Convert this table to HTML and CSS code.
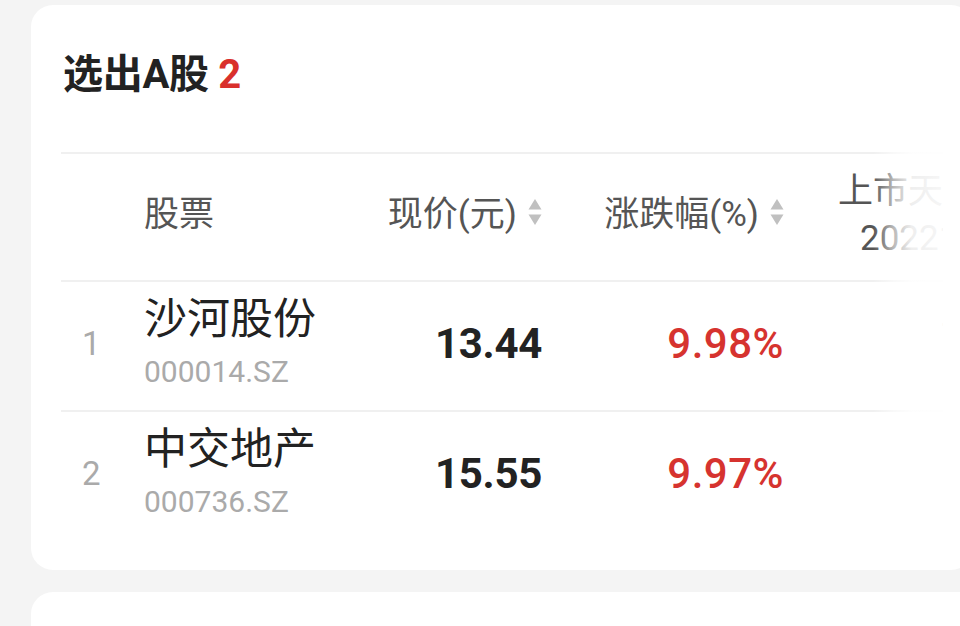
FILE: index.html
```html
<!DOCTYPE html>
<html lang="zh">
<head>
<meta charset="utf-8">
<link rel="stylesheet" href="styles.css">
</head>
<body>
<div class="page">
  <section class="card">
    <h1 class="title">选出A股 <span class="count">2</span></h1>
    <div class="table-wrap">
      <div class="table">
        <div class="row head">
          <div class="cell c-num"></div>
          <div class="cell c-name">股票</div>
          <div class="cell c-price"><span>现价(元)</span>
            <svg class="sort" viewBox="0 0 14 26" width="14" height="26"><path d="M7 0 L13.5 10.5 H0.5 Z" /><path d="M7 26 L13.5 15.5 H0.5 Z" /></svg>
          </div>
          <div class="cell c-pct"><span>涨跌幅(%)</span>
            <svg class="sort" viewBox="0 0 14 26" width="14" height="26"><path d="M7 0 L13.5 10.5 H0.5 Z" /><path d="M7 26 L13.5 15.5 H0.5 Z" /></svg>
          </div>
          <div class="cell c-days"><span class="l1">上市天数</span><span class="l2">20221231</span></div>
        </div>
        <div class="row">
          <div class="cell c-num">1</div>
          <div class="cell c-name"><span class="nm">沙河股份</span><span class="code">000014.SZ</span></div>
          <div class="cell c-price val">13.44</div>
          <div class="cell c-pct up">9.98%</div>
          <div class="cell c-days dv">10586</div>
        </div>
        <div class="row last">
          <div class="cell c-num">2</div>
          <div class="cell c-name"><span class="nm">中交地产</span><span class="code">000736.SZ</span></div>
          <div class="cell c-price val">15.55</div>
          <div class="cell c-pct up">9.97%</div>
          <div class="cell c-days dv"></div>
        </div>
      </div>
      <div class="fade"></div>
    </div>
  </section>
  <section class="card next"></section>
</div>
</body>
</html>
```
FILE: styles.css
```css
html, body {
  margin: 0;
  padding: 0;
  overflow: hidden;
  background: #f4f4f4;
  width: 960px;
  height: 626px;
}
body {
  font-family: Roboto, "Noto Sans CJK SC", sans-serif;
  color: #222;
}
.page {
  padding: 5px 0 0 31px;
  display: flex;
  flex-direction: column;
  gap: 22px;
}
.card {
  background: #fff;
  border-radius: 22px;
  width: 942px;
  padding: 46px 30px 30px 30px;
  box-sizing: border-box;
}
.card.next {
  height: 34px;
  padding: 0;
  border-radius: 22px 0 0 0;
}
.title {
  margin: 0 0 53px 2px;
  font-size: 40px;
  line-height: 48px;
  font-weight: 700;
  color: #222;
  letter-spacing: -0.3px;
}
.count {
  color: #d9302c;
}
.table-wrap {
  position: relative;
  width: 882px;
  overflow: hidden;
}
.table {
  width: 1043px;
}
.row {
  display: grid;
  grid-template-columns: 83px 236px 162px 242px 320px;
  height: 130px;
  padding-bottom: 6px;
  border-top: 2px solid #f0f0f0;
  box-sizing: border-box;
  align-items: center;
}
.row.head {
  height: 128px;
  padding-bottom: 13px;
  font-size: 35px;
  color: #555;
}
.cell {
  box-sizing: border-box;
}
.head .c-price, .head .c-pct {
  display: flex;
  justify-content: flex-end;
  align-items: center;
  gap: 11px;
}
.sort {
  fill: #c0c0c0;
  flex: none;
  margin-top: 2px;
}
.head .c-days {
  display: flex;
  flex-direction: column;
  padding-left: 54px;
  line-height: 47px;
  margin-top: 9px;
  color: #555;
}
.head .c-days .l2 {
  padding-left: 22px;
}
.c-num {
  padding-left: 21px;
  font-size: 33px;
  color: #aaa;
}
.c-name {
  display: flex;
  flex-direction: column;
}
.nm {
  font-size: 43px;
  line-height: 50px;
  color: #222;
  margin-top: -2px;
}
.code {
  font-size: 30px;
  line-height: 36px;
  color: #aaa;
  margin-top: 10px;
}
.val {
  text-align: right;
  font-size: 42px;
  font-weight: 700;
  color: #222;
  letter-spacing: -0.3px;
}
.up {
  text-align: right;
  font-size: 42px;
  font-weight: 500;
  color: #d6332f;
  letter-spacing: 0.5px;
}
.dv {
  padding-left: 156px;
  font-size: 33px;
  color: #333;
  margin-top: -22px;
}
.fade {
  position: absolute;
  top: 0;
  right: 0;
  bottom: 0;
  width: 70px;
  background: linear-gradient(to right, rgba(255,255,255,0) 0%, rgba(255,255,255,0.6) 30%, rgba(255,255,255,0.9) 55%, rgba(255,255,255,0.95) 100%);
}
```
